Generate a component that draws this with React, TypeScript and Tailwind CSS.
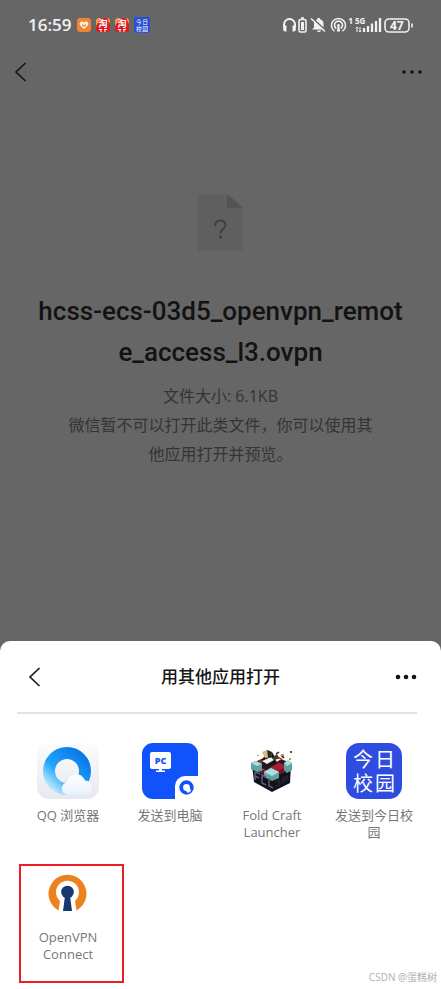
import type { ReactNode } from "react";

const apps: { name: ReactNode; icon: ReactNode; marked?: boolean }[] = [
    { name: "QQ 浏览器", icon: <QQBrowserIcon /> },
    { name: "发送到电脑", icon: <SendToPcIcon /> },
    { name: <>Fold Craft<br />Launcher</>, icon: <FoldCraftIcon /> },
    { name: "发送到今日校园", icon: <CampusIcon /> },
    { name: <>OpenVPN<br />Connect</>, icon: <OpenVpnIcon />, marked: true },
];

export default function App() {
    return (
        <div className="relative min-h-screen bg-[#666666] flex flex-col font-['Open_Sans','Noto_Sans_CJK_SC',sans-serif]">
            <StatusBar />
            <nav className="h-11 pl-2 pr-4 flex items-center justify-between text-[#151515]">
                <BackButton />
                <MoreButton small />
            </nav>
            <main className="flex-1 pt-[100px] px-9 flex flex-col items-center text-center">
                <FileIcon />
                <h1 className="mt-10 text-[26px] leading-[41px] font-medium text-[#131313] font-['Roboto','Noto_Sans_CJK_SC',sans-serif] whitespace-nowrap">
                    hcss-ecs-03d5_openvpn_remot<br />e_access_l3.ovpn
                </h1>
                <p className="mt-2 text-base leading-[30px] text-[#343434]">文件大小: 6.1KB</p>
                <p className="text-base leading-[29px] text-[#343434] whitespace-nowrap">
                    微信暂不可以打开此类文件，你可以使用其<br />他应用打开并预览。
                </p>
            </main>
            <section className="bg-white rounded-t-[10px] pb-[26px]">
                <header className="h-[71px] px-[22px] flex items-center justify-between text-[#151515]">
                    <BackButton />
                    <h2 className="text-[17px] font-medium">用其他应用打开</h2>
                    <MoreButton />
                </header>
                <hr className="ml-[17px] mr-6 border-t-2 border-[#e3e3e3]" />
                <div className="ml-[17px] mr-4 pt-[29px] grid grid-cols-4 gap-y-6">
                    {apps.map((app, i) => (
                        <button key={i} className="relative flex flex-col items-center justify-start">
                            {app.icon}
                            <span className="mt-2 px-2 text-[13px] leading-[17px] text-[#777777]">{app.name}</span>
                            {app.marked && (
                                <span className="absolute -top-px left-[2px] -right-[5px] h-[119px] border-2 border-[#ee1c25]" />
                            )}
                        </button>
                    ))}
                </div>
            </section>
            <small className="absolute right-1 bottom-[5px] text-[10px] leading-[14px] text-[#b0b0b0]">CSDN @蛋糕树</small>
        </div>
    );
}

function StatusBar() {
    return (
        <div className="h-[50px] pl-7 pr-[27px] flex items-center justify-between text-[#f2f2f2]">
            <div className="flex items-center gap-[5px]">
                <time className="text-[17px] font-semibold">16:59</time>
                <svg viewBox="0 0 14 14" className="size-[14px]">
                    <rect width="14" height="14" rx="3" fill="#ee8433" />
                    <path d="M7 11 3.3 7.5C1.2 4.7 4.8 2.1 7 4.5c2.2-2.4 5.8.2 3.7 3Z" fill="#fff3e4" />
                    <path d="m5 6.5 2 1.8 2-1.8" fill="none" stroke="#ee8433" strokeWidth="1.2" />
                </svg>
                <TaobaoBadge />
                <TaobaoBadge />
                <svg viewBox="0 0 56 56" className="size-4">
                    <rect width="56" height="56" rx="8" fill="#2b4fd2" />
                    <CampusText />
                </svg>
            </div>
            <svg viewBox="0 0 132 20" className="w-[132px] h-5" fill="none" stroke="currentColor" strokeWidth="1.6">
                <path d="M2 12V9.5a5 5 0 0 1 11 0V12" strokeWidth="2" />
                <path d="M1.2 10.5h3.3v6H3.2c-1.2 0-2-.8-2-2ZM13.8 10.5h-3.3v6h1.3c1.200 0 2-.8 2-2Z" fill="currentColor" stroke="none" />
                <rect x="17" y="4.5" width="7" height="12.5" rx="1.5" />
                <path d="M19 3h3" />
                <path d="M19 7h3v8h-3Z" fill="currentColor" stroke="none" />
                <path d="M30 14.500h13l-1.500-2V8.5c0-2-1.400-3.800-3.500-4.200V3h-2.500v1.300c-2 .4-3.500 2.200-3.500 4.200v4ZM35 15.500h4c-.3 2.200-3.700 2.200-4 0Z" fill="currentColor" stroke="none" />
                <path d="m30.5 3.500 14 13" stroke="#666666" strokeWidth="2" />
                <path d="m29 3.5 14 13" strokeWidth="1.5" />
                <path d="M52.5 16.2a7 7 0 1 1 8 0M54.3 13.5a4 4 0 1 1 4.4 0" />
                <circle cx="56.5" cy="10.5" r="1.5" fill="currentColor" stroke="none" />
                <path d="M55.5 12h2l.6 4.5h-3.2Z" fill="currentColor" stroke="none" />
                <g fill="currentColor" stroke="none" className="font-['Open_Sans',sans-serif] font-bold">
                    <text x="66" y="9" fontSize="9">1</text>
                    <text x="73" y="9" fontSize="8">5G</text>
                    <text x="108" y="14.500" fontSize="12">47</text>
                </g>
                <path d="M75 12v5M73.8 13.3 75 12l1.2 1.3M78 12v5M76.8 15.7 78 17l1.2-1.3" strokeWidth="1" />
                <path d="M82 17v-4M86 17v-6M90 17V8.500M94 17V6M98 17V3" strokeWidth="2.3" />
                <rect x="103" y="4" width="24" height="13" rx="4" />
                <path d="M130 8.500v4" />
            </svg>
        </div>
    );
}

function TaobaoBadge() {
    return (
        <svg viewBox="0 0 14 14" className="size-[14px]">
            <rect width="14" height="14" rx="3" fill="#dd1d22" />
            <path d="M0 8V3a3 3 0 0 1 3-3h2ZM14 6 11 0a3 3 0 0 1 3 3Z" fill="#e8a13a" />
            <text x="7" y="9" textAnchor="middle" fontSize="9" fontWeight="700" fill="#fff" className="font-['Noto_Sans_CJK_SC',sans-serif]">淘</text>
            <path d="M3 11.500h3M8 11.500h3M4 13h2M8 13h2" stroke="#fff" strokeWidth="1" />
        </svg>
    );
}

function BackButton() {
    return (
        <button aria-label="返回" className="w-[26px] h-8 flex items-center justify-center">
            <svg viewBox="0 0 26 24" className="w-[26px] h-6" fill="none" stroke="currentColor" strokeWidth="1.600">
                <path d="m17.500 3-9.500 9 9.500 9" />
            </svg>
        </button>
    );
}

function MoreButton({ small = false }: { small?: boolean }) {
    const r = small ? 1.8 : 2.3;
    return (
        <button aria-label="更多" className="w-[26px] h-8 flex items-center justify-center">
            <svg viewBox="0 0 26 8" className="w-[26px] h-2" fill="currentColor">
                <circle cx="5" cy="4" r={r} />
                <circle cx="13" cy="4" r={r} />
                <circle cx="21" cy="4" r={r} />
            </svg>
        </button>
    );
}

function FileIcon() {
    return (
        <svg viewBox="0 0 45 57" className="w-[45px] h-[57px]">
            <path d="M0 0h29l16 14v43H0Z" fill="#5f5f5f" />
            <path d="M29 0v14h16Z" fill="#535353" />
            <path d="M17 32c0-7.500 10.500-7 10.500-1 0 4-5 4-5 8.500" fill="none" stroke="#404040" strokeWidth="2" />
            <circle cx="22.500" cy="43" r="1.5" fill="#404040" />
        </svg>
    );
}

function QQBrowserIcon() {
    return (
        <svg viewBox="0 0 62 56" className="w-[62px] h-14">
            <defs>
                <linearGradient id="qq-bg" x1="0" y1="0" x2="0" y2="1">
                    <stop offset="0" stopColor="#fbfcfd" />
                    <stop offset="1" stopColor="#e6e8ef" />
                </linearGradient>
                <linearGradient id="qq-ring" x1="48" y1="10" x2="16" y2="46" gradientUnits="userSpaceOnUse">
                    <stop offset="0" stopColor="#0873e6" />
                    <stop offset="0.65" stopColor="#22a5fa" />
                    <stop offset="1" stopColor="#b5e6ff" />
                </linearGradient>
                <linearGradient id="qq-cloud" x1="0" y1="0" x2="0" y2="1">
                    <stop offset="0" stopColor="#fff" />
                    <stop offset="1" stopColor="#e6f1fb" />
                </linearGradient>
            </defs>
            <rect width="62" height="56" rx="12" fill="url(#qq-bg)" />
            <circle cx="30" cy="28" r="18" fill="none" stroke="url(#qq-ring)" strokeWidth="12" />
            <path d="M32 52c-8.500 0-10-11-1.500-13 .5-9 14-11 17.500-1.500 9 0 9.500 14.500 0 14.500Z" fill="url(#qq-cloud)" />
        </svg>
    );
}

function SendToPcIcon() {
    return (
        <svg viewBox="0 0 56 56" className="size-14">
            <path d="M11 0h34a11 11 0 0 1 11 11v22H43a10 10 0 0 0-10 10v13H11A11 11 0 0 1 0 45V11A11 11 0 0 1 11 0Z" fill="#1053fb" />
            <rect x="8" y="9" width="21" height="17" rx="2" fill="#fff" />
            <path d="M17 26h3v1.500h3V29h-9v-1.500h3Z" fill="#fff" />
            <text x="18.500" y="21" textAnchor="middle" fontSize="9" fontWeight="800" fill="#1053fb" className="font-['Open_Sans',sans-serif]">PC</text>
            <circle cx="44.500" cy="44.500" r="5.300" fill="none" stroke="#1053fb" strokeWidth="3.800" />
            <path d="M44 48c0-3 2-4 4-3l1 3-3 2Z" fill="#fff" />
        </svg>
    );
}

function FoldCraftIcon() {
    return (
        <svg viewBox="0 0 56 56" className="size-14">
            <path d="m8 22 20 10v17L10 39ZM28 32l19-10-1 18-18 9Z" fill="#11121a" />
            <path d="m7 20 20-7 21 7-20 11Z" fill="#231820" />
            <path d="m15 17 8-3 20 9-6 5-7 2-9-3-8-5ZM39 16l-6-3-20 9 8 6Z" fill="#a71d34" />
            <path d="m7 21 21 10v4L7 26ZM28 31l20-10v5L28 35Z" fill="#711526" />
            <path d="m7 20 5-2 6 3v7l-5 1-6-3ZM20 29l7-4 8 4v6l-7 3-8-4ZM40 20l4-3 4 3v7l-5 3-3-3Z" fill="#5fa3a4" />
            <path d="m7 20 5-2 6 3-5 2ZM20 29l7-4 8 4-7 4ZM40 20l4-3 4 3-5 3Z" fill="#a9e0dd" />
            <path d="m17 17 5-5 6-3 3 5 6 4-7 4-8-1Z" fill="#15171d" />
            <path d="m18 18 9-4 3 3-7 4ZM30 15l7 1-4 3Z" fill="#f0f0ec" />
            <path d="m18 9 5-2 5 2-1 5-6 1Z" fill="#d8bb7f" />
            <path d="m23 7 5 2-1 6-3-1Z" fill="#2b251f" />
            <path d="m28 15 5-4 2 4-4 2Z" fill="#4d3527" />
            <path d="m32 11 3-2M40 15l-3-3" stroke="#15171d" strokeWidth="1.500" />
            <path d="M37 11h3v2h-3ZM45 15h2v2h-2ZM13 12h2v1h-2Z" fill="#b3a03e" />
            <path d="M46 8h2v2h-2Z" fill="#59512e" />
            <path d="m11 29 5 2M11 29v8m0-4 4 2M22 34l-4-2v8l4 2M25 35v8l4 2" fill="none" stroke="#5b5d76" strokeWidth="1.500" />
            <path d="m31 39 4-2v4l4-2v-4l5-2M31 44l6-3m2-3 6-3" fill="none" stroke="#221e2a" strokeWidth="2" />
        </svg>
    );
}

function CampusText() {
    return (
        <g fill="#fff" fontSize="20" textAnchor="middle" className="font-['Noto_Sans_CJK_SC',sans-serif]">
            <text x="17" y="24">今</text>
            <text x="39" y="24">日</text>
            <text x="17" y="48">校</text>
            <text x="39" y="48">园</text>
        </g>
    );
}

function CampusIcon() {
    return (
        <svg viewBox="0 0 56 56" className="size-14">
            <rect width="56" height="56" rx="13" fill="#2f4ce0" />
            <CampusText />
        </svg>
    );
}

function OpenVpnIcon() {
    return (
        <svg viewBox="0 0 56 56" className="size-14">
            <path d="M18.500 45.500a19 19 0 1 1 18 0L35 36a11.500 11.500 0 1 0-15 0Z" fill="#ec8120" />
            <circle cx="27.500" cy="27" r="6.300" fill="#18366f" />
            <path d="M25 31h5L32 46h-9Z" fill="#18366f" />
        </svg>
    );
}
